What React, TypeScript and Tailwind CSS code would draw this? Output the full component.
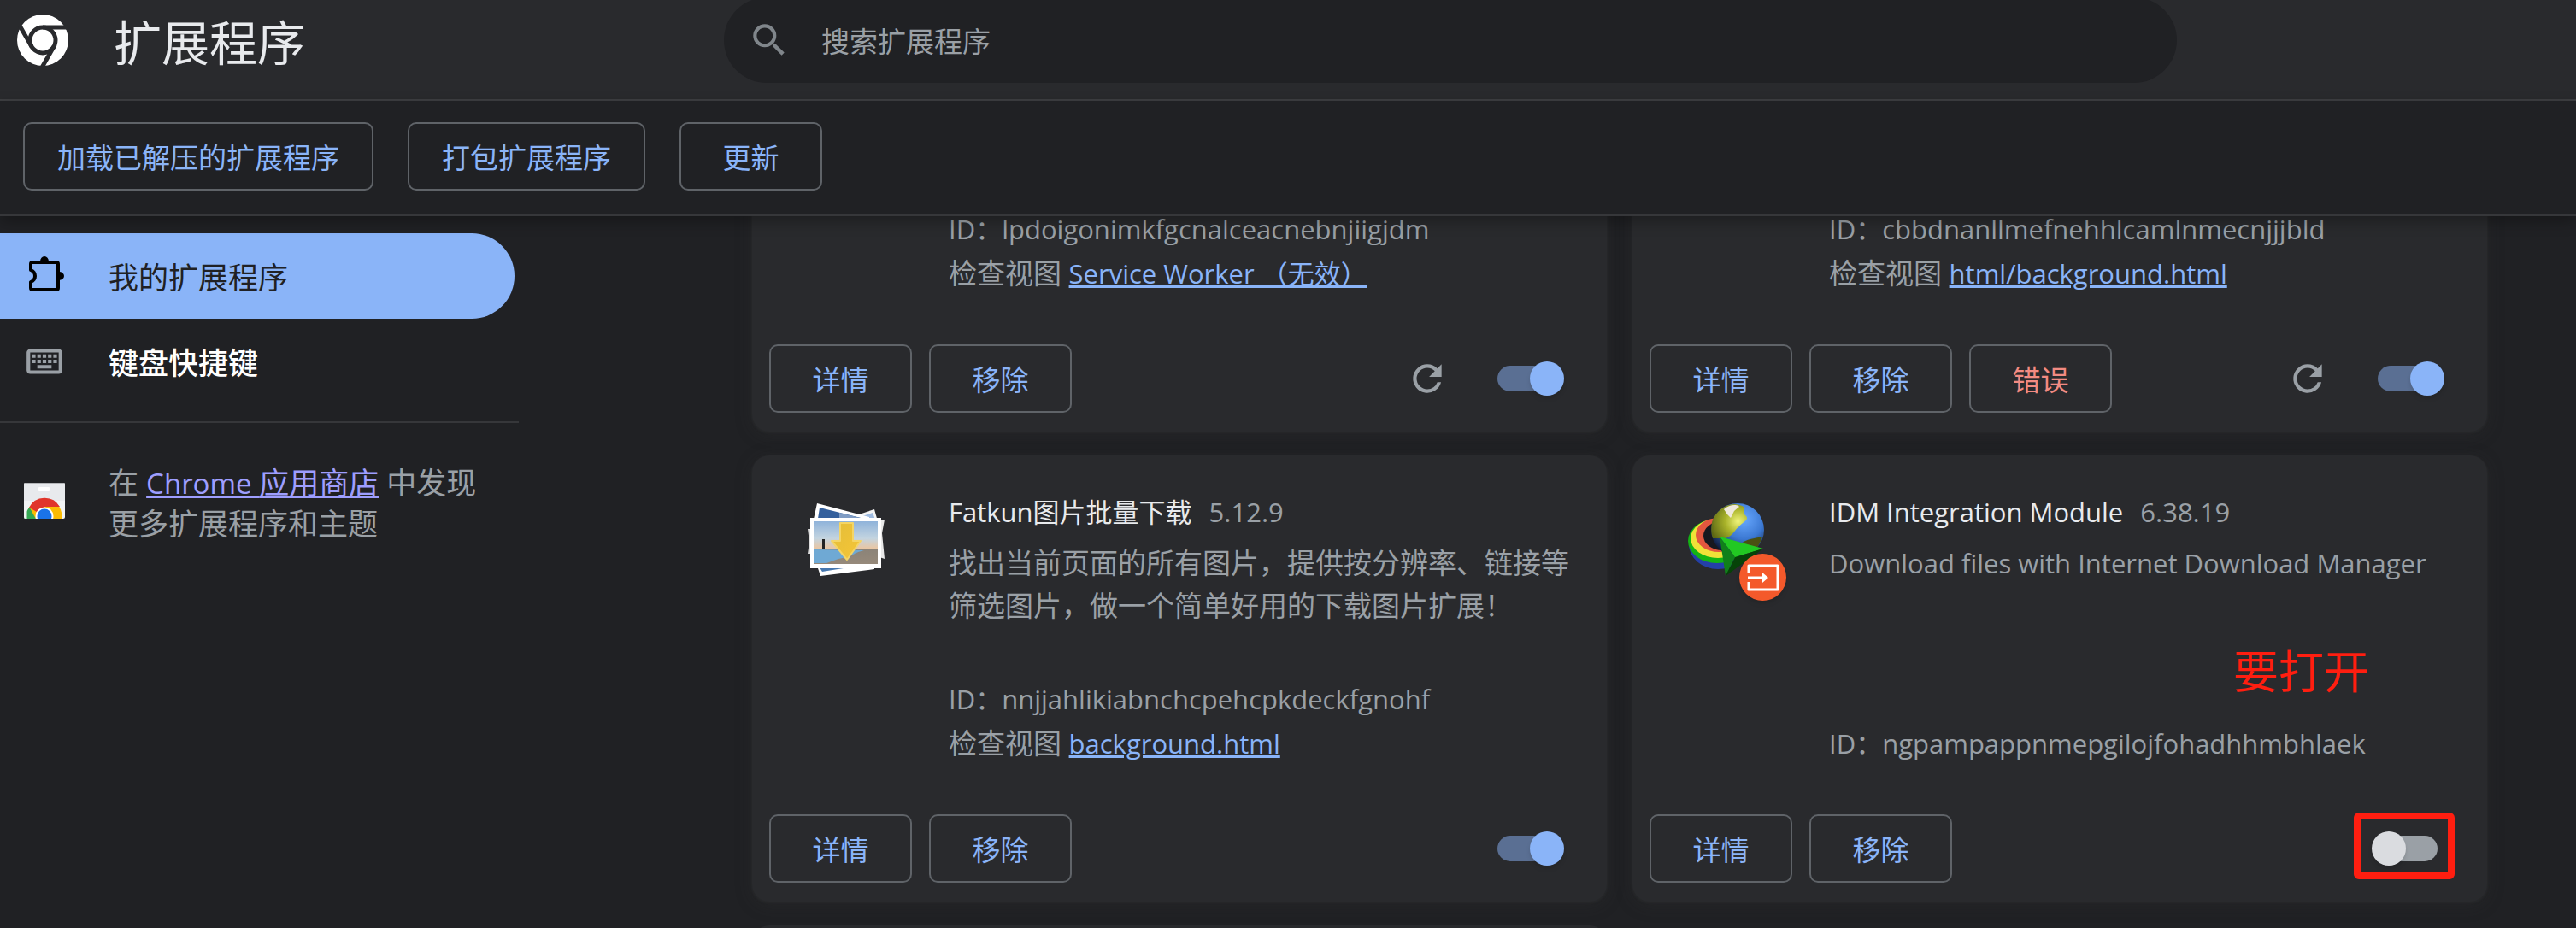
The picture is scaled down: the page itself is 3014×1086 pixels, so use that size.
import type { ReactNode } from 'react';

type Extension = {
  id: string;
  name: string;
  version: string;
  description: string;
  view?: string;
  enabled: boolean;
  reload?: boolean;
  errors?: boolean;
  icon?: ReactNode;
  callout?: string;
};

function ChromeLogo() {
  return (
    <svg className="size-[60px] shrink-0" viewBox="0 0 60 60">
      <circle cx="30" cy="30" r="30" fill="#fff" />
      <circle cx="30" cy="30" r="15" fill="none" stroke="#292a2d" strokeWidth="5" />
      <path d="M30 15H60M17 37.500L3 13M43 37.500L29 62" fill="none" stroke="#292a2d" strokeWidth="5" />
    </svg>
  );
}

function SearchIcon() {
  return (
    <svg className="size-[50px] shrink-0" viewBox="0 0 24 24" fill="#80868b">
      <path d="M15.500 14h-.79l-.28-.27A6.471 6.471 0 0 0 16 9.500 6.500 6.500 0 1 0 9.500 16c1.610 0 3.090-.59 4.230-1.570l.27.28v.79l5 4.990L20.490 19l-4.990-5zm-6 0C7.010 14 5 11.990 5 9.500S7.010 5 9.500 5 14 7.010 14 9.500 11.990 14 9.500 14z" />
    </svg>
  );
}

function PuzzleIcon() {
  return (
    <svg className="size-[50px] shrink-0" viewBox="0 0 50 50" fill="none" stroke="#000" strokeWidth="4" strokeLinejoin="round">
      <path d="M11 9H39Q41 9 41 11V39Q41 41 39 41H11Q9 41 9 39V32Q14 30 14 25Q14 20 9 18V11Q9 9 11 9Z" />
      <path d="M20 8a5 6 0 0 1 10 0zM42 20a6 5 0 0 1 0 10z" fill="#000" stroke="none" />
    </svg>
  );
}

function KeyboardIcon() {
  return (
    <svg className="size-[50px] shrink-0" viewBox="0 0 24 24" fill="#9aa0a6">
      <path d="M20 7v10H4V7h16m0-2H4c-1.100 0-1.990.9-1.990 2L2 17c0 1.100.9 2 2 2h16c1.100 0 2-.9 2-2V7c0-1.100-.9-2-2-2zm-9 3h2v2h-2V8zm0 3h2v2h-2v-2zM8 8h2v2H8V8zm0 3h2v2H8v-2zm-3 0h2v2H5v-2zm0-3h2v2H5V8zm3 6h8v2H8v-2zm6-3h2v2h-2v-2zm0-3h2v2h-2V8zm3 3h2v2h-2v-2zm0-3h2v2h-2V8z" />
    </svg>
  );
}

function StoreIcon() {
  return (
    <svg className="mt-6 h-[42px] w-[48px] shrink-0" viewBox="0 0 48 42">
      <defs>
        <clipPath id="bag"><rect width="48" height="42" rx="2" /></clipPath>
      </defs>
      <g clipPath="url(#bag)">
        <path d="M0 0H48V42H0Z" fill="#f1f3f4" />
        <path d="M0 0H48V21H0Z" fill="#e8eaed" />
        <path d="M0 0H48V1H0Z" fill="#b4b6b9" />
        <rect x="16" y="5" width="15" height="5" rx="2.500" fill="#fff" />
        <circle cx="24" cy="39" r="20.500" fill="#fbbc04" />
        <path d="M24 39L6 29A20.500 20.500 0 0 1 42 28H24Z" fill="#e0352b" />
        <path d="M6.500 28.500L16 46H0V39Q3 33 6.500 28.500Z" fill="#34a853" />
        <path d="M0 22H3.500V42H0Z" fill="#f1f3f4" />
        <circle cx="24" cy="39" r="10.500" fill="#fff" />
        <circle cx="24" cy="39" r="8.500" fill="#1a73e8" />
      </g>
    </svg>
  );
}

function ReloadIcon() {
  return (
    <svg className="size-[50px]" viewBox="0 0 24 24" fill="#9aa0a6">
      <path d="M17.650 6.350A7.958 7.958 0 0 0 12 4a8 8 0 1 0 7.730 10h-2.080A5.990 5.990 0 0 1 12 18a6 6 0 1 1 0-12c1.660 0 3.140.69 4.220 1.780L13 11h7V4l-2.350 2.350z" />
    </svg>
  );
}

function PhotosIcon() {
  return (
    <svg className="size-[90px]" viewBox="0 0 90 90">
      <defs>
        <linearGradient id="sky" x1="0" y1="0" x2="0" y2="1">
          <stop offset="0" stopColor="#8fb3da" />
          <stop offset=".4" stopColor="#c3d4e0" />
          <stop offset=".64" stopColor="#eac6a2" />
          <stop offset=".65" stopColor="#8b8378" />
          <stop offset="1" stopColor="#96897a" />
        </linearGradient>
        <linearGradient id="gold" x1="0" y1="0" x2="1" y2="1">
          <stop offset="0" stopColor="#e3bd3a" />
          <stop offset="1" stopColor="#f6c636" />
        </linearGradient>
      </defs>
      <path d="M60 14L78 8L82 22H60Z" fill="#f4f4f4" />
      <path d="M64 16L76 12L79 20H66Z" fill="#9fbbe0" />
      <path d="M84 20L90 20L87 36L90 66L84 64Z" fill="#e9e9e9" />
      <path d="M0 31H6V60H0L2 46Z" fill="#dcdcdc" />
      <path d="M11 1L72 17V24H6Z" fill="#fff" />
      <path d="M14 6L66 19H12Z" fill="#34609d" />
      <path d="M37 12L66 19H37Z" fill="#7f9cc4" />
      <path d="M11 74H78V78L15 86Z" fill="#fff" />
      <path d="M14 76H48L17 81Z" fill="#4678b0" />
      <rect x="3" y="18" width="83" height="59" fill="#fff" />
      <rect x="7" y="22" width="75" height="50" fill="url(#sky)" />
      <path d="M7 55L66 56C50 60 58 62 36 66L22 71H7Z" fill="#6fa9d4" />
      <path d="M17 43h3v12h-3z" fill="#222" />
      <path d="M38 24H53V45H62L46 67L28 45H38Z" fill="url(#gold)" stroke="#f4d566" strokeWidth="2" strokeLinejoin="round" />
    </svg>
  );
}

function IdmIcon() {
  return (
    <svg className="size-[90px]" viewBox="0 0 90 90">
      <defs>
        <radialGradient id="globe" cx=".62" cy=".3" r=".75">
          <stop offset="0" stopColor="#68a8ff" />
          <stop offset=".5" stopColor="#3b78d2" />
          <stop offset="1" stopColor="#0b1430" />
        </radialGradient>
        <radialGradient id="land" cx=".75" cy=".5" r=".8">
          <stop offset="0" stopColor="#f0f47c" />
          <stop offset=".45" stopColor="#a9b32a" />
          <stop offset="1" stopColor="#5c6614" />
        </radialGradient>
      </defs>
      <ellipse cx="35" cy="49" rx="34" ry="29" fill="#2440a8" />
      <ellipse cx="34" cy="45" rx="34" ry="26" fill="#14b414" />
      <ellipse cx="35" cy="42" rx="32" ry="23" fill="#f0e238" />
      <ellipse cx="36" cy="38" rx="27" ry="20" fill="#e3573f" />
      <ellipse cx="40" cy="39" rx="22" ry="17" fill="#17181f" />
      <circle cx="58" cy="32" r="31" fill="url(#globe)" />
      <path d="M30 18C38 4 52 0 60 3C72 6 62 10 66 14C74 20 64 22 60 28C54 32 54 38 44 42H29C26 34 27 24 30 18Z" fill="url(#land)" />
      <path d="M42 8C48 2 58 2 60 5L54 10L50 18L46 14Z" fill="#efe9dc" />
      <path d="M60 50C68 42 80 42 87 40C84 50 78 58 70 60Z" fill="#4a5112" />
      <path d="M37 40L88 54L55 64Z" fill="#22c822" />
      <path d="M37 40L55 64L44 86Z" fill="#10801a" />
      <path d="M55 64L88 54L44 86Z" fill="#064308" />
    </svg>
  );
}

function IdmBadge() {
  return (
    <span className="absolute top-[60px] left-[60px] flex size-[55px] items-center justify-center rounded-full bg-[#f4592b] shadow-md">
      <svg className="size-[38px]" viewBox="0 0 38 32" fill="none" stroke="#fff" strokeWidth="3">
        <path d="M2 11V2H36V30H2V21" strokeLinejoin="round" />
        <path d="M1 16H19" />
        <path d="M18 10L25 16L18 22Z" fill="#fff" stroke="none" />
      </svg>
    </span>
  );
}

const extensions: Extension[] = [
  {
    id: 'lpdoigonimkfgcnalceacnebnjiigjdm',
    name: '',
    version: '',
    description: '',
    view: 'Service Worker （无效）',
    enabled: true,
    reload: true,
  },
  {
    id: 'cbbdnanllmefnehhlcamlnmecnjjjbld',
    name: '',
    version: '',
    description: '',
    view: 'html/background.html',
    enabled: true,
    reload: true,
    errors: true,
  },
  {
    id: 'nnjjahlikiabnchcpehcpkdeckfgnohf',
    name: 'Fatkun图片批量下载',
    version: '5.12.9',
    description: '找出当前页面的所有图片，提供按分辨率、链接等筛选图片，做一个简单好用的下载图片扩展！',
    view: 'background.html',
    enabled: true,
    icon: <PhotosIcon />,
  },
  {
    id: 'ngpampappnmepgilojfohadhhmbhlaek',
    name: 'IDM Integration Module',
    version: '6.38.19',
    description: 'Download files with Internet Download Manager',
    enabled: false,
    icon: (
      <>
        <IdmIcon />
        <IdmBadge />
      </>
    ),
    callout: '要打开',
  },
];

const isLatin = (text: string) => /^[ -~]*$/.test(text);

function OutlineButton({ children, danger }: { children: ReactNode; danger?: boolean }) {
  return (
    <button
      className={`h-20 min-w-[167px] rounded-[10px] border-2 border-[#5f6368] px-[38px] pt-[3px] text-[33px] whitespace-nowrap ${
        danger ? 'text-[#f28b82]' : 'text-[#8ab4f8]'
      }`}
    >
      {children}
    </button>
  );
}

function Toggle({ label, on }: { label: string; on: boolean }) {
  return (
    <input
      type="checkbox"
      role="switch"
      aria-label={label}
      defaultChecked={on}
      className="relative h-[30px] w-[70px] appearance-none rounded-full bg-[#9aa0a6] before:absolute before:-top-[5px] before:-left-[7px] before:size-10 before:rounded-full before:bg-[#dadce0] before:shadow-md checked:bg-[#5a6f93] checked:before:left-[38px] checked:before:bg-[#8ab4f8]"
    />
  );
}

function ExtensionCard({ ext }: { ext: Extension }) {
  return (
    <article className="relative flex h-[522px] flex-col rounded-[20px] bg-[#292a2d] px-5 pt-5 pb-[22px] shadow-[0_1px_2px_1px_#27282a,0_4px_20px_rgba(50,52,50,0.25)]">
      <div className="flex min-h-0 flex-1 pt-[35px] pl-[45px]">
        <div className="relative size-[90px] shrink-0">{ext.icon}</div>
        <div className="ml-[75px] flex h-[308px] min-w-0 flex-1 flex-col text-[33px] leading-[50px] text-[#9aa0a6]">
          <div className="-mt-[24px] flex h-[70px] shrink-0 items-center gap-5 text-[31px]">
            <h2 className="text-[#e8eaed]">{ext.name}</h2>
            <span>{ext.version}</span>
          </div>
          <p className={isLatin(ext.description) ? 'mb-auto text-[31px]' : 'mb-auto'}>{ext.description}</p>
          <p className="text-[31px] leading-[52px]">ID：{ext.id}</p>
          {ext.view && (
            <p className="leading-[52px]">
              检查视图{' '}
              <a href="#view" className="text-[31px] text-[#8ab4f8] underline decoration-[3px]">
                {ext.view}
              </a>
            </p>
          )}
        </div>
      </div>
      <div className="flex items-center gap-5">
        <OutlineButton>详情</OutlineButton>
        <OutlineButton>移除</OutlineButton>
        {ext.errors && <OutlineButton danger>错误</OutlineButton>}
        <div className="mr-[38px] ml-auto flex items-center gap-[57px]">
          {ext.reload && (
            <button aria-label="重新加载">
              <ReloadIcon />
            </button>
          )}
          <Toggle label={ext.name || ext.id} on={ext.enabled} />
        </div>
      </div>
      {ext.callout && (
        <>
          <span className="absolute right-[138px] bottom-[229px] text-[53px] leading-[80px] text-[#ff1e10]">{ext.callout}</span>
          <span className="pointer-events-none absolute right-[38px] bottom-[26px] h-[78px] w-[118px] rounded-md border-8 border-[#ff1e10]" />
        </>
      )}
    </article>
  );
}

export default function App() {
  return (
    <div className="flex h-screen flex-col overflow-hidden bg-[#202124] font-['Open_Sans','Noto_Sans_CJK_SC',sans-serif] text-white">
      <header className="flex h-[118px] shrink-0 flex-col justify-end overflow-hidden border-b-2 border-[#3e3f42] bg-[#292a2d]">
        <div className="flex h-[138px] shrink-0 items-center pl-5">
          <div className="flex w-[827px] shrink-0 items-center gap-[53px]">
            <ChromeLogo />
            <h1 className="pt-1 text-[56px] leading-[80px] text-[#e8eaed]">扩展程序</h1>
          </div>
          <label className="flex h-[100px] w-full max-w-[1700px] items-center gap-9 rounded-full bg-[#202124] pl-7">
            <SearchIcon />
            <input
              type="text"
              placeholder="搜索扩展程序"
              aria-label="搜索扩展程序"
              className="min-w-0 flex-1 bg-transparent pt-1 text-[33px] outline-none placeholder:text-[#9aa0a6]"
            />
          </label>
        </div>
      </header>

      <div className="z-10 flex h-[135px] shrink-0 items-center gap-10 border-b-2 border-[#36373a] bg-[#202124] px-[27px] pb-[3px] shadow-[0_6px_16px_rgba(0,0,0,0.3)]">
        <OutlineButton>加载已解压的扩展程序</OutlineButton>
        <OutlineButton>打包扩展程序</OutlineButton>
        <OutlineButton>更新</OutlineButton>
      </div>

      <div className="flex min-h-0 flex-1">
        <aside className="w-[776px] shrink-0 pt-5 text-[35px] leading-[47px]">
          <nav>
            <a href="#extensions" className="flex h-[100px] w-[602px] items-center gap-[50px] rounded-r-full bg-[#8ab4f8] pl-[27px] text-[#202124]">
              <PuzzleIcon />
              <span className="pt-[2px]">我的扩展程序</span>
            </a>
            <a href="#shortcuts" className="flex h-[100px] w-[602px] items-center gap-[50px] pl-[27px] font-medium">
              <KeyboardIcon />
              <span className="pt-[2px]">键盘快捷键</span>
            </a>
          </nav>
          <hr className="mt-5 w-[607px] border-t-2 border-[#36373a]" />
          <div className="flex w-[607px] gap-[51px] pt-[46px] pl-7 text-[#9aa0a6]">
            <StoreIcon />
            <p className="w-[450px]">
              在{' '}
              <a href="#store" className="text-[#9e9eff] underline decoration-[3px]">
                <span className="text-[33px]">Chrome </span>应用商店
              </a>{' '}
              中发现更多扩展程序和主题
            </p>
          </div>
        </aside>

        <main className="flex min-w-0 flex-1 justify-center overflow-hidden">
          <div className="-mt-[270px] grid w-full max-w-[2030px] grid-cols-2 content-start gap-x-[30px] gap-y-7">
            {extensions.map((ext) => (
              <ExtensionCard key={ext.id} ext={ext} />
            ))}
            <article className="h-[522px] rounded-[20px] bg-[#292a2d]" />
          </div>
        </main>
      </div>
    </div>
  );
}
